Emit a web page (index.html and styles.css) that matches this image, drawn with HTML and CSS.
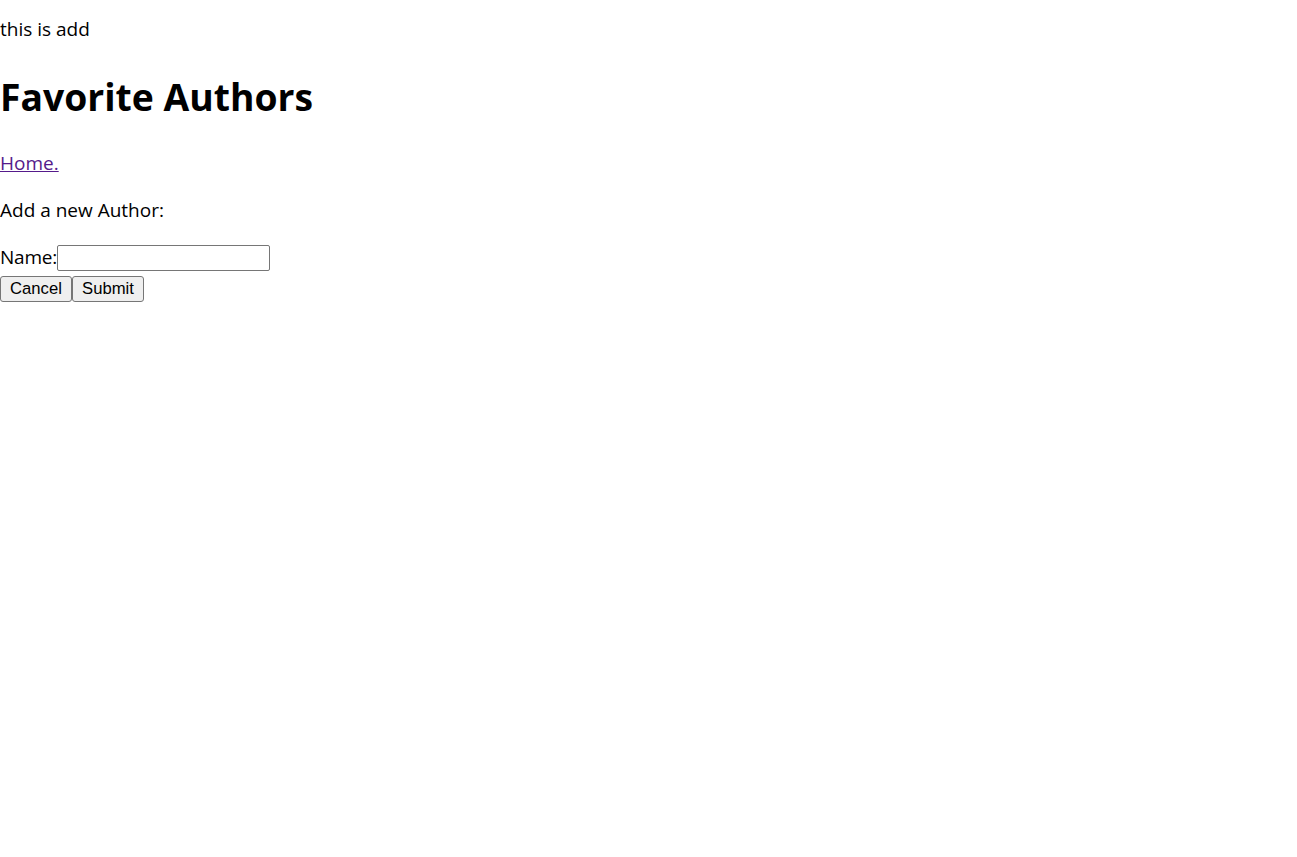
FILE: index.html
```html
<!DOCTYPE html>
<html>
<head>
<meta charset="utf-8">
<title>Favorite Authors</title>
<link rel="stylesheet" href="styles.css">
</head>
<body>
<p class="intro">this is add</p>
<h1 class="title">Favorite Authors</h1>
<p class="nav"><a class="home-link" href="#">Home.</a></p>
<p class="lead">Add a new Author:</p>
<form class="author-form">
  <div class="field-row">
    <label class="field-label" for="name">Name:</label><input class="text-input" id="name" type="text">
  </div>
  <div class="button-row">
    <button class="btn" type="button">Cancel</button><button class="btn" type="submit">Submit</button>
  </div>
</form>
</body>
</html>
```

FILE: styles.css
```css
html, body {
  background: #fff;
}
body {
  margin: 0;
  font-family: "Open Sans", "Noto Sans", sans-serif;
  font-size: 19px;
  line-height: 27px;
  color: #000;
}
p {
  margin: 0;
}
.intro {
  padding-top: 16px;
}
.title {
  margin: 28px 0 0;
  font-size: 37.3px;
  line-height: 52px;
  font-weight: 700;
}
.nav {
  margin-top: 27px;
}
.home-link {
  color: #551a8b;
  text-decoration: underline;
}
.lead {
  margin-top: 20px;
}
.author-form {
  margin-top: 20px;
}
.field-row {
  display: flex;
  align-items: flex-end;
  height: 27px;
}
.field-label {
  display: block;
  letter-spacing: -0.2px;
}
.text-input {
  box-sizing: border-box;
  width: 213px;
  height: 26px;
  margin: 0;
  padding: 1px 3px;
  border: 1px solid #767676;
  border-radius: 2px;
  background: #fff;
  font-family: "Liberation Sans", Arial, sans-serif;
  font-size: 16.67px;
}
.button-row {
  display: flex;
  margin-top: 5px;
}
.btn {
  box-sizing: border-box;
  width: 72px;
  height: 26px;
  margin: 0;
  padding: 0;
  border: 1px solid #767676;
  border-radius: 3px;
  background: #efefef;
  color: #000;
  font-family: "Liberation Sans", Arial, sans-serif;
  font-size: 16.67px;
  line-height: 22px;
  text-align: center;
}
```
